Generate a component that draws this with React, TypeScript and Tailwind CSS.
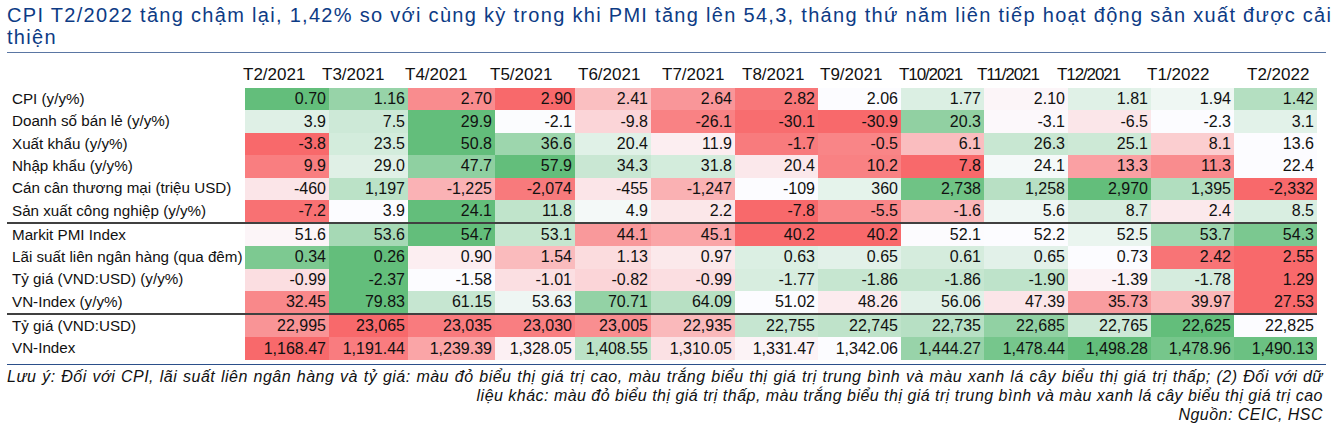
import React from "react";

type Row = { label: string; values: string[]; highRed?: boolean };

const RED: [number, number, number] = [248, 105, 107];
const WHITE: [number, number, number] = [252, 252, 255];
const GREEN: [number, number, number] = [99, 190, 123];

const top: Row[] = [
  { label: "CPI (y/y%)", highRed: true, values: ["0.70", "1.16", "2.70", "2.90", "2.41", "2.64", "2.82", "2.06", "1.77", "2.10", "1.81", "1.94", "1.42"] },
  { label: "Doanh số bán lẻ (y/y%)", values: ["3.9", "7.5", "29.9", "-2.1", "-9.8", "-26.1", "-30.1", "-30.9", "20.3", "-3.1", "-6.5", "-2.3", "3.1"] },
  { label: "Xuất khẩu (y/y%)", values: ["-3.8", "23.5", "50.8", "36.6", "20.4", "11.9", "-1.7", "-0.5", "6.1", "26.3", "25.1", "8.1", "13.6"] },
  { label: "Nhập khẩu (y/y%)", values: ["9.9", "29.0", "47.7", "57.9", "34.3", "31.8", "20.4", "10.2", "7.8", "24.1", "13.3", "11.3", "22.4"] },
  { label: "Cán cân thương mại (triệu USD)", values: ["-460", "1,197", "-1,225", "-2,074", "-455", "-1,247", "-109", "360", "2,738", "1,258", "2,970", "1,395", "-2,332"] },
  { label: "Sản xuất công nghiệp (y/y%)", values: ["-7.2", "3.9", "24.1", "11.8", "4.9", "2.2", "-7.8", "-5.5", "-1.6", "5.6", "8.7", "2.4", "8.5"] },
];
const mid: Row[] = [
  { label: "Markit PMI Index", values: ["51.6", "53.6", "54.7", "53.1", "44.1", "45.1", "40.2", "40.2", "52.1", "52.2", "52.5", "53.7", "54.3"] },
  { label: "Lãi suất liên ngân hàng (qua đêm)", highRed: true, values: ["0.34", "0.26", "0.90", "1.54", "1.13", "0.97", "0.63", "0.65", "0.61", "0.65", "0.73", "2.42", "2.55"] },
  { label: "Tỷ giá (VND:USD) (y/y%)", highRed: true, values: ["-0.99", "-2.37", "-1.58", "-1.01", "-0.82", "-0.99", "-1.77", "-1.86", "-1.86", "-1.90", "-1.39", "-1.78", "1.29"] },
  { label: "VN-Index (y/y%)", values: ["32.45", "79.83", "61.15", "53.63", "70.71", "64.09", "51.02", "48.26", "56.06", "47.39", "35.73", "39.97", "27.53"] },
];
const bottom: Row[] = [
  { label: "Tỷ giá (VND:USD)", highRed: true, values: ["22,995", "23,065", "23,035", "23,030", "23,005", "22,935", "22,755", "22,745", "22,735", "22,685", "22,765", "22,625", "22,825"] },
  { label: "VN-Index", values: ["1,168.47", "1,191.44", "1,239.39", "1,328.05", "1,408.55", "1,310.05", "1,331.47", "1,342.06", "1,444.27", "1,478.44", "1,498.28", "1,478.96", "1,490.13"] },
];

const colW = [84, 79, 87, 80, 76, 84, 83, 83, 83, 84, 83, 83, 83];

const headers: { t: string; w: number; tight?: boolean }[] = [
  { t: "T2/2021", w: 79 },
  { t: "T3/2021", w: 83 },
  { t: "T4/2021", w: 85 },
  { t: "T5/2021", w: 88 },
  { t: "T6/2021", w: 84 },
  { t: "T7/2021", w: 80 },
  { t: "T8/2021", w: 78 },
  { t: "T9/2021", w: 79 },
  { t: "T10/2021", w: 78, tight: true },
  { t: "T11/2021", w: 80, tight: true },
  { t: "T12/2021", w: 90, tight: true },
  { t: "T1/2022", w: 100 },
  { t: "T2/2022", w: 80 },
];

function lerp(a: [number, number, number], b: [number, number, number], t: number) {
  const c = a.map((x, i) => Math.round(x + (b[i] - x) * t));
  return `rgb(${c[0]},${c[1]},${c[2]})`;
}

function colors(row: Row): string[] {
  const nums = row.values.map((v) => parseFloat(v.replace(/,/g, "")));
  const s = [...nums].sort((a, b) => a - b);
  const min = s[0];
  const max = s[s.length - 1];
  const med = s[Math.floor(s.length / 2)];
  const lo = row.highRed ? GREEN : RED;
  const hi = row.highRed ? RED : GREEN;
  return nums.map((v) => {
    if (v <= med) {
      const t = med === min ? 1 : (v - min) / (med - min);
      return lerp(lo, WHITE, t);
    }
    const t = max === med ? 0 : (v - med) / (max - med);
    return lerp(WHITE, hi, t);
  });
}

function DataRow({ row }: { row: Row }) {
  const cs = colors(row);
  return (
    <div className="flex h-[22.4px]">
      <div className="w-[238px] shrink-0 pl-[5px] flex items-center text-[15.2px] text-[#111] whitespace-nowrap">
        {row.label}
      </div>
      {row.values.map((v, i) => (
        <div
          key={i}
          className="shrink-0 flex items-center justify-end pr-[3px] text-[16px] text-[#111]"
          style={{ width: colW[i], backgroundColor: cs[i] }}
        >
          {v}
        </div>
      ))}
    </div>
  );
}

export default function App() {
  return (
    <div className="w-[1334px] h-[428px] overflow-hidden bg-white pl-[7px] font-['Liberation_Sans',Arial,sans-serif]">
      <div className="w-[1318px] pt-[4px] text-[20px] leading-[22px] tracking-[1.3px] text-[#0d3b85]">
        <div className="whitespace-nowrap [text-align-last:justify]">
          CPI T2/2022 tăng chậm lại, 1,42% so với cùng kỳ trong khi PMI tăng lên 54,3, tháng thứ năm liên tiếp hoạt động sản xuất được cải
        </div>
        <div>thiện</div>
      </div>
      <div className="w-[1319px] h-px bg-[#5a76a3] mt-[4px]" />
      <div className="flex h-[35px] pt-[13px] text-[17px] leading-[17px] text-[#111]">
        <div className="w-[236px] shrink-0" />
        {headers.map((h) => (
          <div
            key={h.t}
            className={h.tight ? "shrink-0 whitespace-nowrap tracking-[-1.1px]" : "shrink-0 whitespace-nowrap"}
            style={{ width: h.w }}
          >
            {h.t}
          </div>
        ))}
      </div>
      <div className="w-[1310px]">
        {top.map((r) => (
          <DataRow key={r.label} row={r} />
        ))}
        <div className="h-[1.5px] bg-[#404040]" />
        {mid.map((r) => (
          <DataRow key={r.label} row={r} />
        ))}
        <div className="h-[1.5px] bg-[#404040]" />
        {bottom.map((r) => (
          <DataRow key={r.label} row={r} />
        ))}
      </div>
      <div className="w-[1319px] h-[1.5px] bg-[#2b4f8a] mt-[4px]" />
      <div className="w-[1316px] pt-[1.5px] text-right italic text-[16px] leading-[19.2px] tracking-[0.48px] text-[#111] whitespace-nowrap">
        <div className="[text-align-last:justify]">
          Lưu ý: Đối với CPI, lãi suất liên ngân hàng và tỷ giá: màu đỏ biểu thị giá trị cao, màu trắng biểu thị giá trị trung bình và màu xanh lá cây biểu thị giá trị thấp; (2) Đối với dữ
        </div>
        <div>liệu khác: màu đỏ biểu thị giá trị thấp, màu trắng biểu thị giá trị trung bình và màu xanh lá cây biểu thị giá trị cao</div>
        <div>Nguồn: CEIC, HSC</div>
      </div>
    </div>
  );
}
